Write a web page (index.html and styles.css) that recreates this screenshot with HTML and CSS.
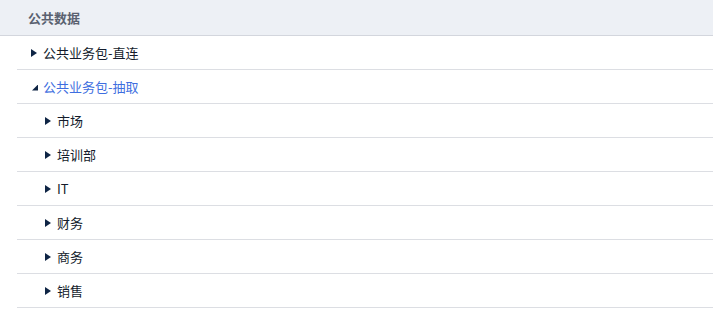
FILE: index.html
```html
<!DOCTYPE html>
<html lang="zh">
<head>
<meta charset="utf-8">
<link rel="stylesheet" href="styles.css">
</head>
<body>
<div class="panel">
  <div class="panel-head">公共数据</div>
  <ul class="tree">
    <li class="node"><span class="caret"></span><span class="label">公共业务包-直连</span></li>
    <li class="node open"><span class="caret"></span><span class="label">公共业务包-抽取</span></li>
    <li class="node child"><span class="caret"></span><span class="label">市场</span></li>
    <li class="node child"><span class="caret"></span><span class="label">培训部</span></li>
    <li class="node child"><span class="caret"></span><span class="label">IT</span></li>
    <li class="node child"><span class="caret"></span><span class="label">财务</span></li>
    <li class="node child"><span class="caret"></span><span class="label">商务</span></li>
    <li class="node child"><span class="caret"></span><span class="label">销售</span></li>
  </ul>
</div>
</body>
</html>
```
FILE: styles.css
```css
html, body {
  margin: 0;
  padding: 0;
  background: #fff;
}
body {
  font-family: "Noto Sans CJK SC", "Noto Sans", sans-serif;
  font-size: 13px;
}
.panel-head {
  height: 35px;
  border-bottom: 1px solid #d3d6dd;
  background: #edf0f5;
  color: #5a6170;
  font-weight: bold;
  display: flex;
  align-items: center;
  padding-left: 28px;
}
.tree {
  list-style: none;
  margin: 0 0 0 17px;
  padding: 0;
}
.node {
  height: 33px;
  border-bottom: 1px solid #dcdee3;
  display: flex;
  align-items: center;
  padding-left: 14px;
  color: #141c2c;
}
.node.child {
  padding-left: 28px;
}
.caret {
  width: 0;
  height: 0;
  border-top: 4.5px solid transparent;
  border-bottom: 4.5px solid transparent;
  border-left: 6px solid #0f2545;
  margin-right: 6px;
}
.node.open .caret {
  border: none;
  width: 6px;
  height: 6px;
  background: #0f2545;
  clip-path: polygon(100% 0, 100% 100%, 0 100%);
  margin-left: 1px;
  margin-right: 5px;
  margin-top: 2px;
}
.node.open .label {
  color: #3e6ee0;
}
```
